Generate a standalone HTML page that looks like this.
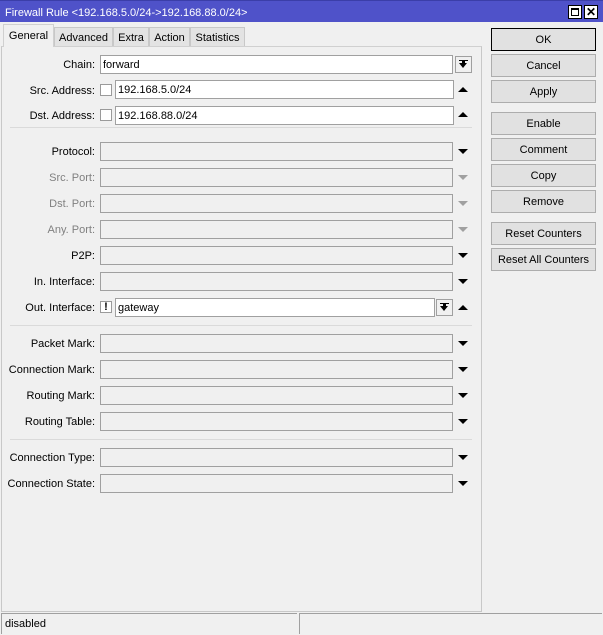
<!DOCTYPE html><html><head><style>
*{margin:0;padding:0;box-sizing:border-box}
body{width:603px;height:634px;background:#f0f0f0;font-family:"Liberation Sans",sans-serif;font-size:11px;color:#000;position:relative;overflow:hidden}
.a{position:absolute}
.lbl{position:absolute;right:508px;text-align:right;white-space:nowrap;line-height:21px}
.g{color:#808080}
.f{position:absolute;height:19px;border:1px solid #a0a0a0;background:#f0f0f0}
.w{background:#fff;line-height:19px;padding-left:2px}
.cb{position:absolute;width:12px;height:12px;border:1px solid #9a9a9a;background:#fff}
.dn{position:absolute;width:0;height:0;border-left:5px solid transparent;border-right:5px solid transparent;border-top:5px solid #000}
.dn.g2{border-top-color:#a0a0a0}
.up{position:absolute;width:0;height:0;border-left:5px solid transparent;border-right:5px solid transparent;border-bottom:5px solid #000}
.sep{position:absolute;left:10px;width:462px;height:1px;background:#dadada}
.btn{position:absolute;left:491px;width:105px;height:23px;border:1px solid #adadad;background:#e1e1e1;text-align:center;line-height:23px}
.tab{position:absolute;top:27px;height:19px;border:1px solid #c8c8c8;border-bottom:none;background:#e3e3e3;text-align:center;line-height:20px}
.dd{position:absolute;width:17px;height:17px;border:1px solid #a0a0a0;background:#f0f0f0}
</style></head><body>
<div class="a" style="left:0;top:0;width:603px;height:22px;background:#4f52c9;border-top:1px solid #3b3ea8"></div>
<div class="a" style="left:5px;top:6px;color:#fff;line-height:14px">Firewall Rule &lt;192.168.5.0/24-&gt;192.168.88.0/24&gt;</div>
<div class="a" style="left:568px;top:5px;width:14px;height:14px;background:#fff;border:1px solid #000"><div class="a" style="left:2px;top:2px;width:8px;height:8px;border:1px solid #000;border-top-width:2px"></div></div>
<div class="a" style="left:584px;top:5px;width:14px;height:14px;background:#fff;border:1px solid #000;font-size:12px;font-weight:bold;line-height:12px;text-align:center">✕</div>

<div class="a" style="left:1px;top:46px;width:481px;height:566px;border:1px solid #c8c8c8;border-top:1px solid #d0d0d0;background:#f0f0f0"></div>
<div class="tab" style="left:3px;top:24px;width:51px;height:23px;background:#f0f0f0;border-color:#d0d0d0;line-height:23px;z-index:2">General</div>
<div class="tab" style="left:54px;width:59px">Advanced</div>
<div class="tab" style="left:113px;width:36px">Extra</div>
<div class="tab" style="left:149px;width:41px">Action</div>
<div class="tab" style="left:190px;width:55px">Statistics</div>

<div class="lbl" style="top:55px">Chain:</div>
<div class="f w" style="left:100px;top:55px;width:353px">forward</div>
<div class="dd" style="left:455px;top:56px"><div class="a" style="left:3px;top:3px;width:9px;height:1px;background:#000"></div><div class="dn" style="left:3px;top:6px;border-left-width:4px;border-right-width:4px"></div><div class="a" style="left:6px;top:4px;width:3px;height:3px;background:#000"></div></div>

<div class="lbl" style="top:81px">Src. Address:</div>
<div class="cb" style="left:100px;top:84px"></div>
<div class="f w" style="left:115px;top:80px;width:339px">192.168.5.0/24</div>
<div class="up" style="left:458px;top:87px"></div>
<div class="lbl" style="top:106px">Dst. Address:</div>
<div class="cb" style="left:100px;top:109px"></div>
<div class="f w" style="left:115px;top:106px;width:339px">192.168.88.0/24</div>
<div class="up" style="left:458px;top:112px"></div>
<div class="sep" style="top:127px"></div>

<div class="lbl" style="top:142px">Protocol:</div><div class="f" style="left:100px;top:142px;width:353px"></div><div class="dn" style="left:458px;top:149px"></div>
<div class="lbl g" style="top:168px">Src. Port:</div><div class="f" style="left:100px;top:168px;width:353px"></div><div class="dn g2" style="left:458px;top:175px"></div>
<div class="lbl g" style="top:194px">Dst. Port:</div><div class="f" style="left:100px;top:194px;width:353px"></div><div class="dn g2" style="left:458px;top:201px"></div>
<div class="lbl g" style="top:220px">Any. Port:</div><div class="f" style="left:100px;top:220px;width:353px"></div><div class="dn g2" style="left:458px;top:227px"></div>
<div class="lbl" style="top:246px">P2P:</div><div class="f" style="left:100px;top:246px;width:353px"></div><div class="dn" style="left:458px;top:253px"></div>
<div class="lbl" style="top:272px">In. Interface:</div><div class="f" style="left:100px;top:272px;width:353px"></div><div class="dn" style="left:458px;top:279px"></div>
<div class="lbl" style="top:298px">Out. Interface:</div>
<div class="cb" style="left:100px;top:301px;font-weight:bold;font-size:11px;line-height:10px;text-align:center">!</div>
<div class="f w" style="left:115px;top:298px;width:320px">gateway</div>
<div class="dd" style="left:436px;top:299px"><div class="a" style="left:3px;top:3px;width:9px;height:1px;background:#000"></div><div class="dn" style="left:3px;top:6px;border-left-width:4px;border-right-width:4px"></div><div class="a" style="left:6px;top:4px;width:3px;height:3px;background:#000"></div></div>
<div class="up" style="left:458px;top:305px"></div>
<div class="sep" style="top:325px"></div>

<div class="lbl" style="top:334px">Packet Mark:</div><div class="f" style="left:100px;top:334px;width:353px"></div><div class="dn" style="left:458px;top:341px"></div>
<div class="lbl" style="top:360px">Connection Mark:</div><div class="f" style="left:100px;top:360px;width:353px"></div><div class="dn" style="left:458px;top:367px"></div>
<div class="lbl" style="top:386px">Routing Mark:</div><div class="f" style="left:100px;top:386px;width:353px"></div><div class="dn" style="left:458px;top:393px"></div>
<div class="lbl" style="top:412px">Routing Table:</div><div class="f" style="left:100px;top:412px;width:353px"></div><div class="dn" style="left:458px;top:419px"></div>
<div class="sep" style="top:439px"></div>
<div class="lbl" style="top:448px">Connection Type:</div><div class="f" style="left:100px;top:448px;width:353px"></div><div class="dn" style="left:458px;top:455px"></div>
<div class="lbl" style="top:474px">Connection State:</div><div class="f" style="left:100px;top:474px;width:353px"></div><div class="dn" style="left:458px;top:481px"></div>

<div class="btn" style="top:28px;border:1px solid #000;">OK</div>
<div class="btn" style="top:54px">Cancel</div>
<div class="btn" style="top:80px">Apply</div>
<div class="btn" style="top:112px">Enable</div>
<div class="btn" style="top:138px">Comment</div>
<div class="btn" style="top:164px">Copy</div>
<div class="btn" style="top:190px">Remove</div>
<div class="btn" style="top:222px">Reset Counters</div>
<div class="btn" style="top:248px">Reset All Counters</div>

<div class="a" style="left:1px;top:613px;width:296px;height:21px;border-top:1px solid #a0a0a0;border-left:1px solid #a0a0a0;padding-left:3px;line-height:21px">disabled</div>
<div class="a" style="left:299px;top:613px;width:303px;height:21px;border-top:1px solid #a0a0a0;border-left:1px solid #a0a0a0"></div>
</body></html>
